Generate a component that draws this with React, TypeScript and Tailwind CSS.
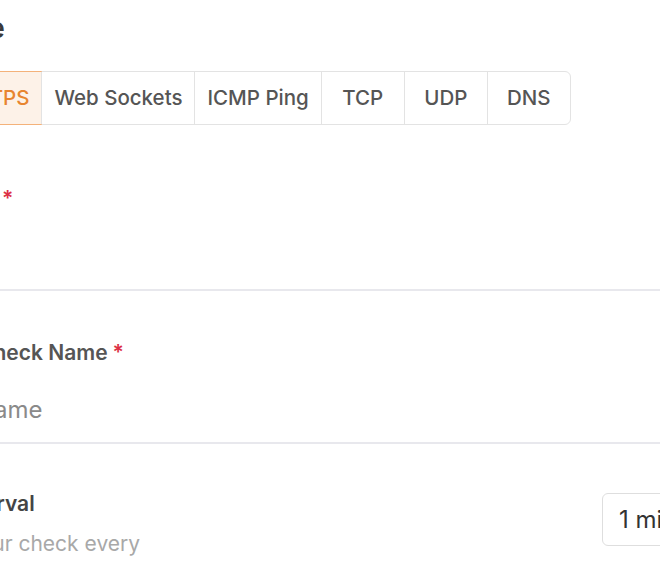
import { useState } from 'react';

const CHECK_TYPES = ['HTTPS', 'Web Sockets', 'ICMP Ping', 'TCP', 'UDP', 'DNS'];

function Required() {
  return <span className="ml-[5px] text-[#dc2f45]">*</span>;
}

export default function App() {
  const [checkType, setCheckType] = useState('HTTPS');

  return (
    <div className="w-[660px] h-[577px] overflow-hidden bg-white font-['Inter','Liberation_Sans',sans-serif]">
      <div className="w-[820px] -ml-[60px]">
        {/* Check type */}
        <h2 className="pt-[11px] text-[28px] leading-[34px] font-semibold text-[#3a3a3a] -ml-[96px]">
          Check Type
        </h2>
        <div className="mt-[26px] inline-flex rounded-[6px] border border-[#e3e3e3] ml-[8px]">
          {CHECK_TYPES.map((t, i) => {
            const active = t === checkType;
            return (
              <button
                key={t}
                onClick={() => setCheckType(t)}
                className={
                  'h-[52px] min-w-[83px] px-3 text-[20.5px] font-medium ' +
                  (i > 0 ? 'border-l border-[#e3e3e3] ' : '') +
                  (active
                    ? 'text-[#e8852f] bg-[#fdf2e8] outline outline-1 outline-[#f4b27a] rounded-l-[6px]'
                    : 'text-[#555555]')
                }
              >
                {t}
              </button>
            );
          })}
        </div>

        {/* URL */}
        <div className="mt-[60px] h-[106px] border-b-2 border-[#e8e8ed]">
          <label className="block text-[21px] leading-[28px] font-semibold text-[#4d4d4d] ml-[16px]">
            URL
            <Required />
          </label>
        </div>

        {/* Check name */}
        <div className="pt-[48px] h-[153px] border-b-2 border-[#e8e8ed]">
          <label className="block text-[21px] leading-[28px] font-semibold text-[#555555] ml-[38px]">
            Check Name
            <Required />
          </label>
          <input
            placeholder="Name"
            className="mt-[27px] block w-[600px] text-[24px] leading-[32px] text-[#333] placeholder:text-[#8a8a8a] outline-none ml-[36px]"
          />
        </div>

        {/* Interval */}
        <div className="pt-[46px] flex items-start justify-between">
          <div>
            <div className="text-[21px] leading-[28px] font-semibold text-[#444444] ml-[18px]">Interval</div>
            <div className="mt-[12px] text-[21px] leading-[28px] text-[#a8a8a8] -ml-[16px]">
              Run your check every
            </div>
          </div>
          <div className="mt-[3px] h-[53px] w-[158px] rounded-[6px] border border-[#dedede] pl-[16px] flex items-center text-[24px] text-[#333333]">
            1 minute
          </div>
        </div>
      </div>
    </div>
  );
}
